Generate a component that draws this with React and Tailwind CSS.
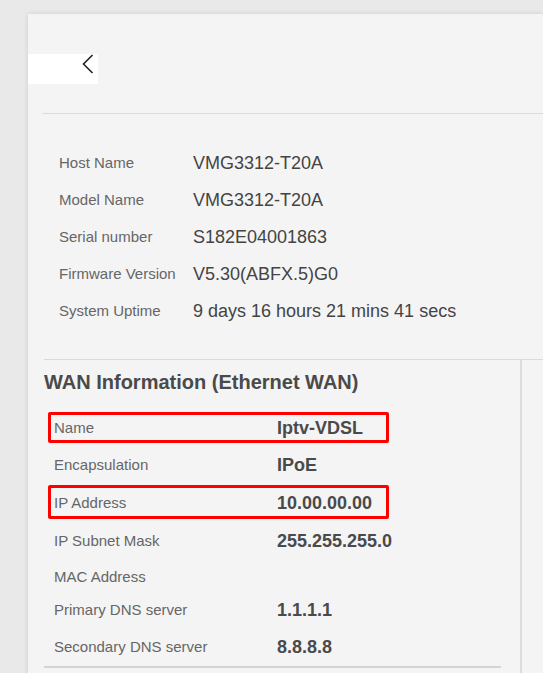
import React from 'react';

const deviceInfo = [
  { label: 'Host Name', value: 'VMG3312-T20A' },
  { label: 'Model Name', value: 'VMG3312-T20A' },
  { label: 'Serial number', value: 'S182E04001863' },
  { label: 'Firmware Version', value: 'V5.30(ABFX.5)G0' },
  { label: 'System Uptime', value: '9 days 16 hours 21 mins 41 secs' },
];

const WanRow = ({ label, value, boxed, h }) => (
  <div
    className={`ml-[4px] w-[341px] flex items-center pl-[3px] pt-[2px] border-[3px] rounded-[2px] ${boxed ? 'border-[#ff0000]' : 'border-transparent'} ${h}`}
  >
    <div className="w-[223px] shrink-0 text-[15px] text-[#666666]">{label}</div>
    <div className="shrink-0 whitespace-nowrap text-[18px] font-bold text-[#4a4a4a]">{value}</div>
  </div>
);

export default function App() {
  return (
    <div
      className="h-screen bg-[#e9e9e9] pt-[14px] pl-[28px] overflow-hidden"
      style={{ fontFamily: '"Liberation Sans", Arial, sans-serif' }}
    >
      <div className="bg-[#f4f4f4] h-[700px] shadow-[0_0_5px_rgba(0,0,0,0.12)]">
        {/* back button */}
        <div className="pt-[40px]">
          <div className="w-[70px] h-[30px] bg-white flex items-start justify-end pr-[4px]">
            <svg width="12" height="22" viewBox="0 0 12 22" fill="none">
              <polyline points="10.5,1 1.5,10 10.5,19" stroke="#222" strokeWidth="1.6" />
            </svg>
          </div>
        </div>

        <div className="mt-[29px] ml-[14px] h-px bg-[#dadada]" />

        {/* device info */}
        <div className="pt-[31px] pl-[31px]">
          {deviceInfo.map((row) => (
            <div key={row.label} className="h-[37px] flex items-center">
              <div className="w-[134px] text-[15px] text-[#666666]">{row.label}</div>
              <div className="text-[18px] text-[#444444]">{row.value}</div>
            </div>
          ))}
        </div>

        {/* WAN info */}
        <div className="mt-[29px] ml-[16px] border-t border-[#dadada] flex">
          <div className="w-[478px] border-r-2 border-[#dcdcdc] h-[320px]">
            <h2 className="pt-[11px] leading-[23px] text-[20px] font-bold text-[#4a4a4a]">
              WAN Information (Ethernet WAN)
            </h2>
            <div className="w-[457px] mt-[18px] border-b-2 border-[#d4d4d4]">
              <WanRow label="Name" value="Iptv-VDSL" boxed h="h-[31px]" />
              <WanRow label="Encapsulation" value="IPoE" h="h-[42px]" />
              <WanRow label="IP Address" value="10.00.00.00" boxed h="h-[34px]" />
              <WanRow label="IP Subnet Mask" value="255.255.255.0" h="h-[42px]" />
              <WanRow label="MAC Address" value="" h="h-[31px]" />
              <WanRow label="Primary DNS server" value="1.1.1.1" h="h-[34px]" />
              <WanRow label="Secondary DNS server" value="8.8.8.8" h="h-[40px]" />
            </div>
          </div>
          <div className="flex-1" />
        </div>
      </div>
    </div>
  );
}
